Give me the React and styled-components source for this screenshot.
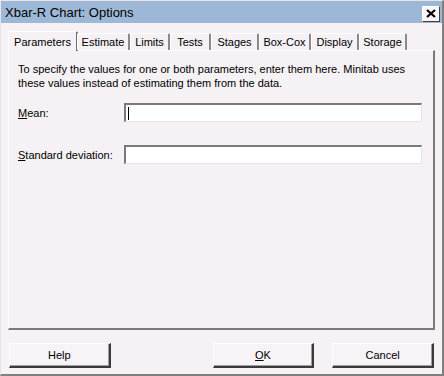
import React from 'react';
import styled, { createGlobalStyle } from 'styled-components';

const GlobalStyle = createGlobalStyle`
  html, body {
    margin: 0;
    padding: 0;
    background: #f5f1f5;
  }
  body {
    font-family: "Liberation Sans", Arial, sans-serif;
    font-size: 11px;
    color: #000;
  }
`;

const Window = styled.div`
  box-sizing: border-box;
  width: 444px;
  height: 376px;
  display: flex;
  flex-direction: column;
  background: #f5f1f5;
  border-top: 1px solid #e8e4e8;
  border-left: 1px solid #e8e4e8;
  border-right: 2px solid #808080;
  border-bottom: 2px solid #808080;
`;

const TitleBar = styled.div`
  height: 22px;
  display: flex;
  align-items: center;
  justify-content: space-between;
  background: #9db8d6;
  padding: 0 2px 0 4px;
  font-size: 13px;
`;

const CloseButton = styled.button`
  box-sizing: border-box;
  width: 18px;
  height: 16px;
  margin-top: 3px;
  padding: 0;
  display: flex;
  align-items: center;
  justify-content: center;
  background: #f7f5f7;
  border-top: 1px solid #fff;
  border-left: 1px solid #fff;
  border-right: 1px solid #404040;
  border-bottom: 1px solid #404040;
`;

const Content = styled.div`
  flex: 1;
  display: flex;
  flex-direction: column;
  padding: 8px 7px 0 7px;
`;

const TabStrip = styled.div`
  display: flex;
  align-items: flex-end;
  height: 19px;
  padding-left: 2px;
  position: relative;
  z-index: 1;
`;

const Tab = styled.div`
  box-sizing: border-box;
  width: ${p => p.$w}px;
  height: ${p => (p.$active ? '20px' : '17px')};
  margin: ${p => (p.$active ? '0 -1px -1px -2px' : '0')};
  display: flex;
  align-items: center;
  justify-content: center;
  white-space: nowrap;
  font-size: 11px;
  background: #f5f1f5;
  border-top: 1px solid #fff;
  border-left: 1px solid #fff;
  border-right: 2px solid ${p => (p.$active ? '#6f6f6f' : '#8a8a8a')};
  border-radius: 2px 2px 0 0;
`;

const Panel = styled.div`
  box-sizing: border-box;
  height: 280px;
  display: flex;
  flex-direction: column;
  padding: 11px 9px 0 9px;
  border-top: 1px solid #fff;
  border-left: 1px solid #fff;
  border-right: 2px solid #7a7a7a;
  border-bottom: 2px solid #7a7a7a;
`;

const Intro = styled.p`
  margin: 0 0 13px 0;
  line-height: 14px;
  white-space: nowrap;
`;

const FieldRow = styled.div`
  display: flex;
  align-items: center;
  margin-bottom: 23px;
`;

const Label = styled.label`
  width: 106px;
  white-space: nowrap;
  u {
    text-decoration: underline;
  }
`;

const Field = styled.div`
  box-sizing: border-box;
  width: 298px;
  height: 19px;
  background: #fff;
  border-top: 2px solid #7a7a7a;
  border-left: 2px solid #7a7a7a;
  border-right: 1px solid #e4e4e4;
  border-bottom: 1px solid #e4e4e4;
  display: flex;
  align-items: center;
  padding-left: 2px;
`;

const Caret = styled.span`
  width: 1px;
  height: 13px;
  background: #000;
`;

const ButtonRow = styled.div`
  display: flex;
  align-items: center;
  padding: 13px 1px 0 1px;
`;

const Button = styled.button`
  box-sizing: border-box;
  width: 102px;
  height: 25px;
  margin-left: ${p => p.$gap || 0}px;
  background: #f7f3f7;
  font-family: "Liberation Sans", Arial, sans-serif;
  font-size: 11px;
  color: #000;
  padding: 0;
  border-top: 1px solid #fff;
  border-left: 1px solid #fff;
  border-right: 2px solid #3a3a3a;
  border-bottom: 2px solid #3a3a3a;
  box-shadow: inset -1px -1px 0 #a0a0a0;
  u {
    text-decoration: underline;
  }
`;

const tabs = [
  ['Parameters', 70],
  ['Estimate', 53],
  ['Limits', 40],
  ['Tests', 41],
  ['Stages', 48],
  ['Box-Cox', 52],
  ['Display', 48],
  ['Storage', 48],
];

export default function App() {
  return (
    <>
      <GlobalStyle />
      <Window>
        <TitleBar>
          <span>Xbar-R Chart: Options</span>
          <CloseButton aria-label="Close">
            <svg width="10" height="9" viewBox="0 0 10 9">
              <path d="M1 1 L9 8 M9 1 L1 8" stroke="#000" strokeWidth="2.2" />
            </svg>
          </CloseButton>
        </TitleBar>
        <Content>
          <TabStrip>
            {tabs.map(([t, w], i) => (
              <Tab key={t} $w={w} $active={i === 0}>{t}</Tab>
            ))}
          </TabStrip>
          <Panel>
            <Intro>
              To specify the values for one or both parameters, enter them here. Minitab uses
              <br />
              these values instead of estimating them from the data.
            </Intro>
            <FieldRow>
              <Label><u>M</u>ean:</Label>
              <Field><Caret /></Field>
            </FieldRow>
            <FieldRow>
              <Label><u>S</u>tandard deviation:</Label>
              <Field />
            </FieldRow>
          </Panel>
          <ButtonRow>
            <Button>Help</Button>
            <Button $gap={102}><u>O</u>K</Button>
            <Button $gap={18}>Cancel</Button>
          </ButtonRow>
        </Content>
      </Window>
    </>
  );
}
